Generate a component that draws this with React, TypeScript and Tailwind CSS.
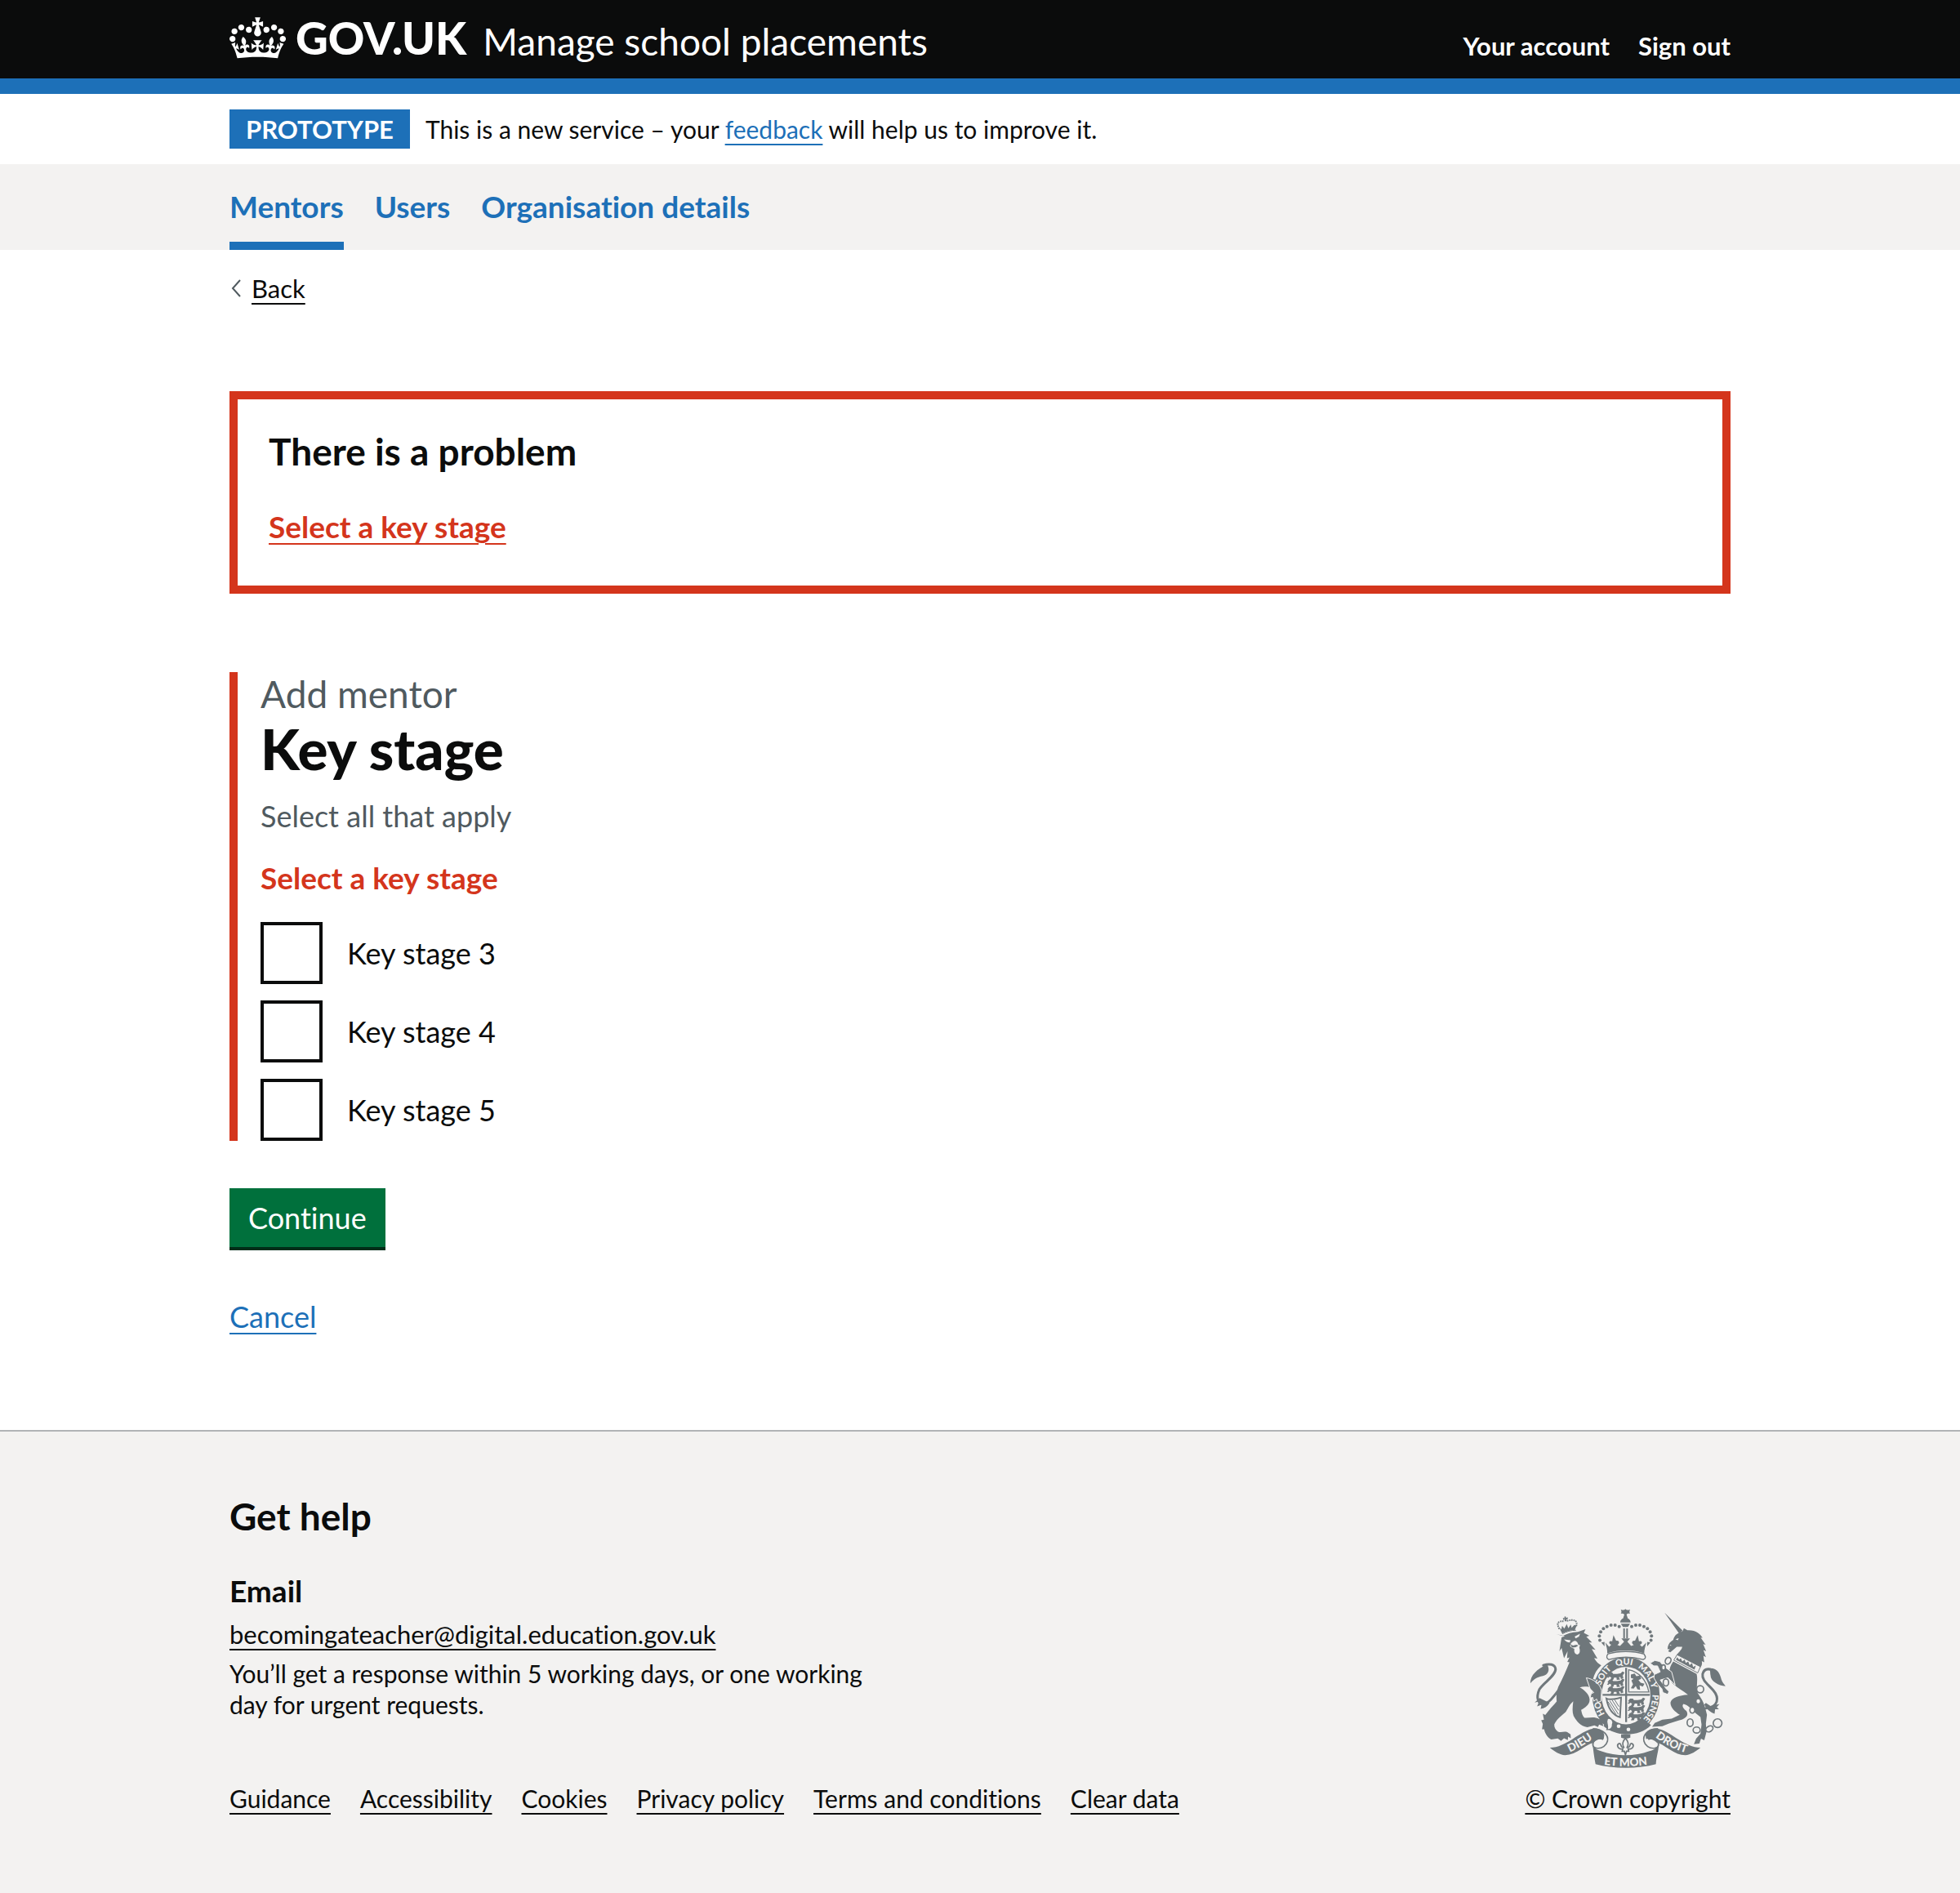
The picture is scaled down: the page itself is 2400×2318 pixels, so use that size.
import React from "react";

const CROWN_PATH =
  "M25 30.2c3.5 1.5 7.7-.2 9.1-3.7 1.5-3.6-.2-7.8-3.9-9.2-3.6-1.4-7.6.3-9.1 3.9-1.4 3.5.3 7.5 3.9 9zM9 39.5c3.6 1.5 7.8-.2 9.2-3.7 1.5-3.6-.2-7.8-3.9-9.1-3.6-1.5-7.6.2-9.1 3.8-1.4 3.5.3 7.5 3.8 9zM4.4 57.2c3.5 1.5 7.7-.2 9.1-3.8 1.5-3.6-.2-7.7-3.9-9.1-3.5-1.5-7.6.3-9.1 3.8-1.4 3.5.3 7.6 3.9 9.1zm38.3-21.4c3.5 1.5 7.7-.2 9.1-3.8 1.5-3.6-.2-7.7-3.9-9.1-3.6-1.5-7.6.3-9.1 3.8-1.3 3.6.4 7.7 3.9 9.1zm64.4-5.6c-3.6 1.5-7.8-.2-9.1-3.7-1.5-3.6.2-7.8 3.8-9.2 3.6-1.4 7.7.3 9.2 3.9 1.3 3.5-.4 7.5-3.9 9zm15.9 9.3c-3.6 1.5-7.7-.2-9.1-3.7-1.5-3.6.2-7.8 3.7-9.1 3.6-1.5 7.7.2 9.2 3.8 1.5 3.5-.3 7.5-3.8 9zm4.7 17.7c-3.6 1.5-7.8-.2-9.2-3.8-1.5-3.6.2-7.7 3.9-9.1 3.6-1.5 7.7.3 9.2 3.8 1.3 3.5-.4 7.6-3.9 9.1zM89.3 35.8c-3.6 1.5-7.8-.2-9.2-3.8-1.4-3.6.2-7.7 3.9-9.1 3.6-1.5 7.7.3 9.2 3.8 1.4 3.6-.3 7.7-3.9 9.1zM69.7 17.7l8.9 4.7V9.3l-8.9 2.8c-.2-.3-.5-.6-.9-.9L72.4 0H59.6l3.5 11.2c-.3.3-.6.5-.9.9l-8.8-2.8v13.1l8.8-4.7c.3.3.6.7.9.9l-5 15.4v.1c-.2.8-.4 1.6-.4 2.4 0 4.1 3.1 7.5 7 8.1h.2c.3 0 .7.1 1 .1.4 0 .7 0 1-.1h.2c4-.6 7.1-4.1 7.1-8.1 0-.8-.1-1.7-.4-2.4V34l-5.1-15.4c.4-.2.7-.6 1-.9zM66 92.8c16.9 0 32.8 1.1 47.1 3.2 4-16.9 8.9-26.7 14-33.5l-9.6-3.4c1 4.9 1.1 7.2 0 10.2-1.5-1.4-3-4.3-4.2-8.7L108.6 76c2.8-2 5-3.2 7.5-3.3-4.4 9.4-10 11.9-13.6 11.2-4.3-.8-6.3-4.6-5.6-7.9 1-4.7 5.7-5.9 8-.5 4.3-8.7-3-11.4-7.6-8.8 7.1-7.2 7.9-13.5 2.1-21.1-8 6.1-8.1 12.3-4.5 20.8-4.7-5.4-12.1-2.5-9.5 6.2 3.4-5.2 7.9-2 7.2 3.1-.6 4.3-6.4 7.8-13.5 7.2-10.3-.9-10.9-8-11.2-13.8 2.5-.5 7.1 1.8 11 7.3L80.2 60c-4.1 4.4-8 5.3-12.3 5.4 1.4-4.4 8-11.6 8-11.6H55.5s6.4 7.2 7.9 11.6c-4.2-.1-8-1-12.3-5.4l1.4 16.4c3.9-5.5 8.5-7.7 10.9-7.3-.3 5.8-.9 12.8-11.1 13.8-7.2.6-12.9-2.9-13.5-7.2-.7-5 3.8-8.3 7.1-3.1 2.7-8.7-4.6-11.6-9.4-6.2 3.7-8.5 3.6-14.7-4.6-20.8-5.8 7.6-5 13.9 2.2 21.1-4.7-2.6-11.9.1-7.7 8.8 2.3-5.5 7.1-4.2 8.1.5.7 3.3-1.3 7.1-5.7 7.9-3.5.7-9-1.8-13.5-11.2 2.5.1 4.7 1.3 7.5 3.3l-4.7-15.4c-1.2 4.4-2.7 7.2-4.3 8.7-1.1-3-.9-5.3 0-10.2l-9.5 3.4c5 6.9 9.9 16.7 14 33.5 14.8-2.1 30.8-3.2 47.7-3.2z";

const FONT = "font-['Lato','Liberation_Sans',sans-serif]";
const CONTAINER = "mx-auto w-full max-w-[1838px]";
const UNDERLINE = "underline decoration-2 underline-offset-[6px]";

const navItems = [
  { label: "Mentors", current: true },
  { label: "Users", current: false },
  { label: "Organisation details", current: false },
];

const keyStages = ["Key stage 3", "Key stage 4", "Key stage 5"];

const footerLinks = [
  "Guidance",
  "Accessibility",
  "Cookies",
  "Privacy policy",
  "Terms and conditions",
  "Clear data",
];

const crownBeads = [
  [298, 174], [296, 158], [301, 143], [311, 131], [324, 123], [339, 118], [354, 118], [369, 123],
];

/* Three small walking lions, stacked. */
function Lions({ x, y }: { x: number; y: number }) {
  return (
    <g transform={`translate(${x} ${y}) scale(1.1)`}>
      {[0, 24, 48].map((dy) => (
        <path
          key={dy}
          transform={`translate(0 ${dy})`}
          d="M0 10 l6-8 10 0 3 5 13 0 12-2 6-6 7 3-6 10 2 9-8 3 -2-7-5 1 4 8-11 1-1-8-8 0-3 8-10 0 4-8-6-3-4 4-5-2 5-5z"
        />
      ))}
    </g>
  );
}

function RoyalArms() {
  return (
    <svg
      viewBox="40 55 720 592"
      className="h-[197px] w-[240px] fill-[#6f777b]"
      role="img"
      aria-label="Royal coat of arms"
    >
      {/* lion's crown */}
      <g>
        <path d="M172 86l2 6 6-3-1 9-5-2 2 8h-8l1-8-6 3-1-8 6 2-1-6z" />
        <g fill="none" stroke="#6f777b" strokeWidth="6" strokeDasharray="5 3">
          <path d="M149 132c-12-20-6-30 18-28" />
          <path d="M211 122c6-20-6-28-36-19" />
        </g>
        <path d="M148 126l8 8 3-14 8 11 9-17 6 15 9-13 3 12 10-11 8 3-6 16c-16 0-34 5-47 13z" />
        <path d="M160 150c14-8 32-13 50-13" fill="none" stroke="#6f777b" strokeWidth="3" />
      </g>
      {/* lion */}
      <path d="M138 151l22 7c16-8 35-14 57-15l28-10-6 14 20 10-11 4 21 21-11 0 24 27-14-3 21 35-12-2c6 12 15 21 26 27-16 14-26 32-30 50 16 6 32 18 45 36l-3 42-10 10-5-14-8 5-6-11 8-12-14 4-7-11 10-7-14-1-1-7 12-3-20-1c-14-2-26-2-36 1 18 10 34 25 36 43 2 20-15 31-31 40 2 12 5 22 12 29 18 2 36-6 54 5l18 4 6 14-11-2 3 10-16-6-4 9-13-6-26 7c-26-4-40-22-51-42-6-18-3-36-1-54-18 16-20 30-30 42-20 16-34 30-40 44 0 12 5 20 14 26 12 4 22-2 34 2l12 8 1 14-10-6-1 13-14-7-11 10-12-9-24 4c-14-8-24-24-26-38l-8 0 3-19-6-14 10-2-4-22 9 5c14-20 30-36 42-50-2-18-1-36 6-54 16-30 29-60 41-90l-8-2 8-16-9 3 2-26-13 26-9-38-8 12 8-51 12-4z" />
      <g className="fill-[#f3f2f1]">
        <path d="M166 171l24 3-3 8c-9 0-15-4-21-11zM205 160l20-10-4 10-12 7zM191 186c8-10 16-14 24-5l4 9 6 2-3 9c4 12 3 22-6 25-10-1-14-9-12-21l-10-4-6-6z" />
      </g>
      <path d="M189 188l10 5 12-3 8 3-10 6-14 2z" />
      <path
        d="M148 355C125 385 110 405 92 408C70 410 62 385 75 355C90 330 135 305 135 280C133 262 112 258 90 266"
        fill="none"
        stroke="#6f777b"
        strokeWidth="9"
        strokeLinecap="round"
      />
      <path d="M42 332c0-30 24-52 62-70 12 22 3 38-16 43-20 4-34 12-46 27zM76 386l-18 17 16-4-7 18 16-6-3 15c14-2 26-10 33-22z" />
      {/* garter */}
      <ellipse cx="394" cy="377" rx="124" ry="142" />
      <ellipse cx="394" cy="377" rx="90" ry="106" className="fill-[#f3f2f1]" />
      {/* central crown */}
      <path d="M375 60c8 4 12 4 17-1 5 5 9 5 17 1-3 7-3 11 0 16-6-2-10-1-13 3l5 15h-18l5-15c-4-4-8-5-13-3 3-5 3-9 0-16zM373 108c0-22 38-22 38 0zM375 113h34l-8 12h-18z" />
      {crownBeads.map(([x, y]) => (
        <g key={x + "-" + y}>
          <circle cx={x} cy={y} r="6" />
          <circle cx={784 - x} cy={y} r="6" />
        </g>
      ))}
      <path d="M384 130h6v36h-6zM395 130h6v36h-6z" />
      <path d="M318 182l14 16 8-8c-12-2-9-18 3-12l5-23 10 21c10-4 16 10 4 15l10 4 15-16-10-12h32l-10 12 14 16 10-4c-12-6-6-18 4-15l10-21 5 23c12-6 15 10 3 12l8 8 16-16c-4 14-8 26-8 40-44-14-92-14-136 0 1-14-3-26-7-40zM303 182l12-2 0 16z M484 182l-12-2 0 16z" />
      <path d="M328 224c38-12 92-12 132 0 9 12 6 18-3 21-40-12-86-12-126 0-8-4-11-12-3-21z" className="fill-[#f3f2f1]" stroke="#6f777b" strokeWidth="4" />
      <path id="garter-line" d="M394 491A97 114 0 0 1 394 263A97 114 0 0 1 394 491" fill="none" />
      {/* quartered shield */}
      <g>
        <path d="M391 275h7v200h-7zM308 371h174v7H308z" />
        <path d="M404 282c38 8 66 38 74 82h-74z" fill="none" stroke="#6f777b" strokeWidth="4" />
        <path d="M412 300l14-4 6 10 14-2 4 12-10 4 8 10 14 4-6 10-12-4 2 16-10-2-6-12-8 10-10-2 8-14-6-14 8-6-10-4z" />
        <Lions x={326} y={290} />
        <Lions x={402} y={386} />
        <path d="M322 388c16 8 36 0 54-3l-4 72c-26-8-44-34-50-69z" fill="none" stroke="#6f777b" strokeWidth="6" />
        <path d="M334 396l32 50M343 394l24 38M352 392l16 26M328 400l30 48" stroke="#6f777b" strokeWidth="3" />
      </g>
      {/* buckle and strap */}
      <path d="M320 466c40 34 108 40 152 6l14 14c-46 46-130 42-174 4z" />
      <path d="M326 462c14-4 24 10 18 22 2 12-8 20-20 18 8-10-6-26 2-40z" className="fill-[#f3f2f1]" stroke="#6f777b" strokeWidth="4" />
      <g className="fill-[#f3f2f1]">
        <circle cx="367" cy="490" r="7" />
        <circle cx="403" cy="502" r="7" />
      </g>
      {/* paw over the garter */}
      <path d="M248 312C274 316 298 334 304 358L302 398L290 402L286 390L276 398L272 384L262 386L266 370L276 366L262 352z" stroke="#f3f2f1" strokeWidth="3" />
      {/* unicorn's head and collar */}
      <path d="M536 72l66 66-12 12zM548 198c2-12 10-20 20-26 4-16 14-24 26-27l9-6 4-10 13 8c30-2 48 14 56 28l-7-1 18 26-9-2 11 26-10-4 9 26-9-5 3 24-9-5c2 12 0 18-6 24l-88-42c4-12 20-20 22-34l-20 0-14 12-10 8-8-4 6-8-8 1z" />
      <path d="M576 170l12-4-3 8zM554 190l6 0 0 5z" className="fill-[#f3f2f1]" />
      <path d="M582 227l86 44-10 23-88-47z" className="fill-[#f3f2f1]" stroke="#6f777b" strokeWidth="3" />
      <path d="M582 236l8 9 6-5 5 12 9-7 4 12 9-5 5 13 9-7 4 14 10-5-5 15-68-36z" />
      {/* unicorn's body and legs */}
      <path d="M568 252L654 298C660 325 650 345 658 368C670 385 682 405 686 425L692 448L688 480L690 512L682 542L670 536L664 554L644 556L652 536L668 518L672 484L668 456L650 442C634 426 622 412 606 408C598 414 604 424 616 434C626 448 616 462 590 468L552 480L528 490L490 492L500 478L528 466L562 462L592 448C574 436 556 420 558 402C562 384 590 376 622 374C604 360 584 350 570 336C550 320 546 280 568 252z" />
      <path d="M562 290L536 272L518 252L500 248L483 258L496 268L510 268L520 290L498 300L497 313L510 335L526 352L530 366L548 373L552 362L540 350L530 334L520 320L548 312L575 338z" stroke="#f3f2f1" strokeWidth="3" />
      <path
        d="M688 424C735 420 738 385 715 358C695 335 672 320 676 298C680 282 692 278 705 281"
        fill="none"
        stroke="#6f777b"
        strokeWidth="9"
        strokeLinecap="round"
      />
      <path d="M698 277C732 274 740 298 745 318C748 330 757 335 760 343C735 340 705 325 705 302C703 294 706 286 698 277zM688 404L706 416L738 408L728 420L736 428L722 428L720 444C704 438 690 426 682 410z" />
      {/* chain */}
      <g className="fill-[#f3f2f1]" stroke="#6f777b" strokeWidth="5">
        <ellipse cx="549" cy="249" rx="10" ry="13" transform="rotate(25 549 249)" />
        <ellipse cx="532" cy="274" rx="7" ry="10" />
        <ellipse cx="541" cy="329" rx="10" ry="13" />
        <circle cx="667" cy="354" r="13" />
        <ellipse cx="660" cy="398" rx="9" ry="10" />
        <ellipse cx="638" cy="431" rx="9" ry="11" />
        <ellipse cx="630" cy="477" rx="11" ry="14" />
        <ellipse cx="654" cy="504" rx="13" ry="11" />
        <ellipse cx="701" cy="500" rx="14" ry="10" transform="rotate(-30 701 500)" />
        <circle cx="731" cy="479" r="16" />
      </g>
      <g className={`${FONT} fill-[#f3f2f1] text-[32px] font-black`} textAnchor="middle">
        <text><textPath href="#garter-line" startOffset="18%">HO</textPath></text>
        <text><textPath href="#garter-line" startOffset="36%">SOIT</textPath></text>
        <text><textPath href="#garter-line" startOffset="49%">QUI</textPath></text>
        <text><textPath href="#garter-line" startOffset="64%">MAL Y</textPath></text>
        <text><textPath href="#garter-line" startOffset="82%">PENSE</textPath></text>
      </g>
      {/* motto ribbon */}
      <g>
        <path d="M114 569c60 0 108-60 158-70 24-4 40 8 42 24l-2 14c-14-2-28 2-38 14-30 6-60 44-104 46-20-2-40-14-56-28z" />
        <path d="M272 499c44 2 58 28 54 46-4 16-20 28-38 26-18 0-20-18-10-28 8-8 22-10 32-4" fill="none" stroke="#6f777b" strokeWidth="5" />
        <path d="M668 569c-60 0-108-60-158-70-26-4-42 8-44 24l2 14c14-2 30 2 40 14 30 6 60 44 104 46 20-2 40-14 56-28z" />
        <path d="M512 499c-44 2-56 28-52 46 4 16 20 28 38 26 18 0 20-18 10-28-8-8-22-10-32-4" fill="none" stroke="#6f777b" strokeWidth="5" />
        <path d="M270 548c4 22 14 28 32 34 56 20 124 20 178 0 18-6 30-12 34-30 2 24-8 46-10 78-66 18-156 18-222 0-6-30-8-52-12-82z" />
      </g>
      <path id="dieu-line" d="M178 590Q230 568 280 530" fill="none" />
      <path id="mon-line" d="M290 628Q392 646 496 628" fill="none" />
      <path id="droit-line" d="M496 526Q552 572 622 590" fill="none" />
      <g className={`${FONT} fill-[#f3f2f1] text-[41px] font-black`} textAnchor="middle">
        <text><textPath href="#dieu-line" startOffset="50%">DIEU</textPath></text>
        <text><textPath href="#mon-line" startOffset="50%">ET MON</textPath></text>
        <text><textPath href="#droit-line" startOffset="50%">DROIT</textPath></text>
      </g>
      {/* fleur-de-lis */}
      <path d="M376 520h34v12l-10 3h-14l-10-3z" />
      <path
        d="M392 534c-12 14-12 22-6 34-14 4-8-18-18-14-10 6-4 22 14 20l-2 8h8l4 14 4-14h8l-2-8c18 2 24-14 14-20-10-4-4 18-18 14 6-12 6-20-6-34z"
        className="fill-[#f3f2f1]"
        stroke="#6f777b"
        strokeWidth="5"
      />
    </svg>
  );
}

export default function App() {
  return (
    <div className={`${FONT} min-h-screen bg-white text-[30px] leading-[38px] text-[#0b0c0c] [font-variant-ligatures:none]`}>
      <header className="border-b-[19px] border-[#1d70b8] bg-[#0b0c0c] text-white">
        <div className={`${CONTAINER} flex items-end justify-between pt-4 pb-4`}>
          <div className="flex items-end gap-5">
            <a href="#home" aria-label="GOV.UK" className="flex items-center gap-3 pb-1">
              <svg viewBox="0 0 132 97" className="h-[51px] w-[69px] fill-white" aria-hidden="true">
                <path fillRule="evenodd" d={CROWN_PATH} />
              </svg>
              <span className="text-[55px] leading-[60px] font-black">GOV.UK</span>
            </a>
            <a href="#service" className="text-[46px] leading-[58px]">Manage school placements</a>
          </div>
          <nav aria-label="Account" className="flex gap-[35px] text-[31px] leading-[48px] font-bold">
            <a href="#account">Your account</a>
            <a href="#sign-out">Sign out</a>
          </nav>
        </div>
      </header>

      <div className={`${CONTAINER} flex items-center gap-[19px] py-[19px]`}>
        <strong className="bg-[#1d70b8] px-5 text-[31px] leading-[48px] font-bold text-white">PROTOTYPE</strong>
        <p>
          This is a new service – your{" "}
          <a href="#feedback" className={`${UNDERLINE} text-[#1d70b8]`}>feedback</a> will help us to improve it.
        </p>
      </div>

      <nav aria-label="Primary" className="bg-[#f3f2f1]">
        <ul className={`${CONTAINER} flex gap-[38px] text-[37px] leading-[48px] font-bold text-[#1d70b8]`}>
          {navItems.map((item) => (
            <li key={item.label} className="flex">
              <a
                href={"#" + item.label}
                aria-current={item.current ? "page" : undefined}
                className={
                  item.current
                    ? "border-b-[10px] border-[#1d70b8] pt-7 pb-[19px]"
                    : "border-b-[10px] border-transparent pt-7 pb-[19px]"
                }
              >
                {item.label}
              </a>
            </li>
          ))}
        </ul>
      </nav>

      <div className={`${CONTAINER} flex flex-col items-start pt-7 pb-[115px]`}>
        <a href="#back" className={`${UNDERLINE} flex items-center gap-3 text-[31px]`}>
          <svg viewBox="0 0 14 22" className="ml-px h-[22px] w-[14px] fill-none stroke-[#505a5f] stroke-2" aria-hidden="true">
            <path d="M12 1L3 11l9 10" />
          </svg>
          Back
        </a>

        <main className="mt-[107px] flex w-full flex-col items-start text-[36px] leading-[48px]">
          <section
            role="alert"
            aria-labelledby="problem-title"
            className="w-full border-[10px] border-[#d4351c] px-[38px] pt-10 pb-12"
          >
            <h2 id="problem-title" className="mb-11 text-[46px] font-bold">There is a problem</h2>
            <a href="#key-stage" className={`${UNDERLINE} block w-fit text-[37px] font-bold text-[#d4351c]`}>Select a key stage</a>
          </section>

          <form className="mt-24" onSubmit={(event) => event.preventDefault()}>
            <fieldset id="key-stage" className="border-l-[10px] border-[#d4351c] pl-7">
              <legend className="contents">
                <span className="block text-[46px] leading-[54px] text-[#505a5f]">Add mentor</span>
                <span className="mt-0.5 block text-[69px] leading-[76px] font-black">Key stage</span>
              </legend>
              <p className="mt-5 text-[#505a5f]">Select all that apply</p>
              <p className="mt-7 text-[37px] font-bold text-[#d4351c]">Select a key stage</p>
              <div className="mt-[30px] flex flex-col gap-5">
                {keyStages.map((stage, index) => (
                  <div key={stage} className="flex items-center">
                    <input
                      type="checkbox"
                      id={"stage-" + index}
                      className="size-[76px] appearance-none border-4 border-[#0b0c0c] bg-white"
                    />
                    <label htmlFor={"stage-" + index} className="pl-[30px]">{stage}</label>
                  </div>
                ))}
              </div>
            </fieldset>
            <button type="submit" className="mt-[58px] block h-[72px] bg-[#00703c] px-[23px] text-white shadow-[0_4px_0_#002d18]">
              Continue
            </button>
          </form>

          <a href="#cancel" className={`${UNDERLINE} mt-[61px] text-[#1d70b8]`}>Cancel</a>
        </main>
      </div>

      <footer className="border-t-2 border-[#b1b4b6] bg-[#f3f2f1] pt-[75px] pb-[97px]">
        <div className={`${CONTAINER} flex items-end justify-between`}>
          <div>
            <h2 className="text-[46px] leading-[58px] font-bold">Get help</h2>
            <h3 className="mt-[38px] text-[37px] leading-[48px] font-bold">Email</h3>
            <a
              href="mailto:becomingateacher@digital.education.gov.uk"
              className={`${UNDERLINE} mt-2.5 block w-fit text-[31px]`}
            >
              becomingateacher@digital.education.gov.uk
            </a>
            <p className="mt-2.5 max-w-[800px]">
              You’ll get a response within 5 working days, or one working day for urgent requests.
            </p>
            <ul className="mt-[77px] flex gap-9">
              {footerLinks.map((label) => (
                <li key={label}>
                  <a href={"#" + label} className={UNDERLINE}>{label}</a>
                </li>
              ))}
            </ul>
          </div>
          <div className="flex flex-col items-center gap-[17px]">
            <RoyalArms />
            <a href="#crown-copyright" className={UNDERLINE}>© Crown copyright</a>
          </div>
        </div>
      </footer>
    </div>
  );
}
